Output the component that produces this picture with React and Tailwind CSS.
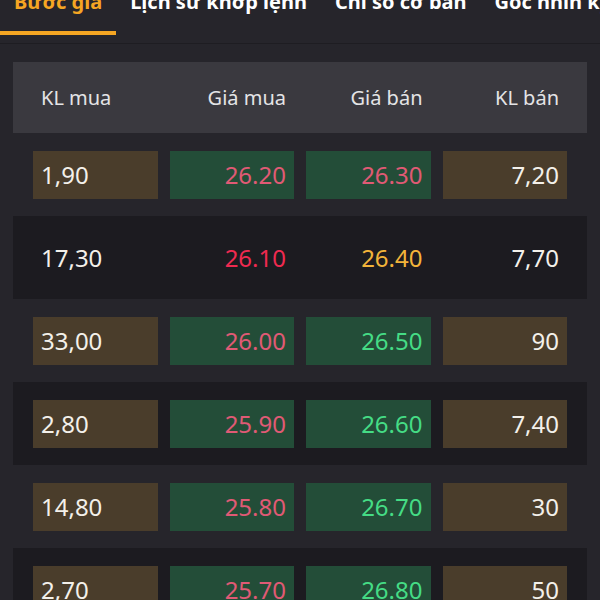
import React from 'react';

const tabs = ['Bước giá', 'Lịch sử khớp lệnh', 'Chỉ số cơ bản', 'Góc nhìn kỹ thuật'];

const rows = [
  { klMua: '1,90', giaMua: '26.20', giaBan: '26.30', klBan: '7,20', muaColor: 'text-[#e05a75]', banColor: 'text-[#e05a75]', boxed: true },
  { klMua: '17,30', giaMua: '26.10', giaBan: '26.40', klBan: '7,70', muaColor: 'text-[#f02a50]', banColor: 'text-[#f2b43a]', boxed: false },
  { klMua: '33,00', giaMua: '26.00', giaBan: '26.50', klBan: '90', muaColor: 'text-[#e05a75]', banColor: 'text-[#45dc85]', boxed: true },
  { klMua: '2,80', giaMua: '25.90', giaBan: '26.60', klBan: '7,40', muaColor: 'text-[#e05a75]', banColor: 'text-[#45dc85]', boxed: true },
  { klMua: '14,80', giaMua: '25.80', giaBan: '26.70', klBan: '30', muaColor: 'text-[#e05a75]', banColor: 'text-[#45dc85]', boxed: true },
  { klMua: '2,70', giaMua: '25.70', giaBan: '26.80', klBan: '50', muaColor: 'text-[#e05a75]', banColor: 'text-[#45dc85]', boxed: true },
];

function Cell({ children, bg, align, color }) {
  return (
    <div className={`h-[48px] flex items-center px-2 ${bg} ${align}`}>
      <span className={`text-[24px] ${color}`}>{children}</span>
    </div>
  );
}

export default function App() {
  return (
    <div className="w-[600px] h-[600px] overflow-hidden bg-[#26252b] font-['Noto_Sans',sans-serif]">
      {/* Tabs */}
      <div className="h-[44px] border-b border-[#1e1d22] overflow-hidden">
        <div className="flex -mt-[12px] whitespace-nowrap">
          {tabs.map((t, i) => (
            <div key={t} className="flex flex-col shrink-0">
              <span
                className={`px-[14px] text-[20px] font-bold leading-[28px] ${
                  i === 0 ? 'text-[#f5a623]' : 'text-white'
                }`}
              >
                {t}
              </span>
              <div className={`mt-[15px] h-[4px] w-full ${i === 0 ? 'bg-[#f5a623]' : ''}`} />
            </div>
          ))}
        </div>
      </div>

      {/* Table */}
      <div className="mx-[13px] mt-[18px]">
        <div className="h-[71px] bg-[#3a393f] grid grid-cols-4 gap-[12px] px-[20px] items-center text-[20px] text-[#e4e4e6]">
          <div className="px-2">KL mua</div>
          <div className="px-2 text-right">Giá mua</div>
          <div className="px-2 text-right">Giá bán</div>
          <div className="px-2 text-right">KL bán</div>
        </div>

        {rows.map((r, i) => (
          <div
            key={i}
            className={`h-[83px] grid grid-cols-4 gap-[12px] px-[20px] items-center ${
              i % 2 === 1 ? 'bg-[#1c1b20]' : ''
            }`}
          >
            <Cell bg={r.boxed ? 'bg-[#4a3d2b]' : ''} align="justify-start" color="text-[#f3f0ea]">
              {r.klMua}
            </Cell>
            <Cell bg={r.boxed ? 'bg-[#234d38]' : ''} align="justify-end" color={r.muaColor}>
              {r.giaMua}
            </Cell>
            <Cell bg={r.boxed ? 'bg-[#234d38]' : ''} align="justify-end" color={r.banColor}>
              {r.giaBan}
            </Cell>
            <Cell bg={r.boxed ? 'bg-[#4a3d2b]' : ''} align="justify-end" color="text-[#f3f0ea]">
              {r.klBan}
            </Cell>
          </div>
        ))}
      </div>
    </div>
  );
}
